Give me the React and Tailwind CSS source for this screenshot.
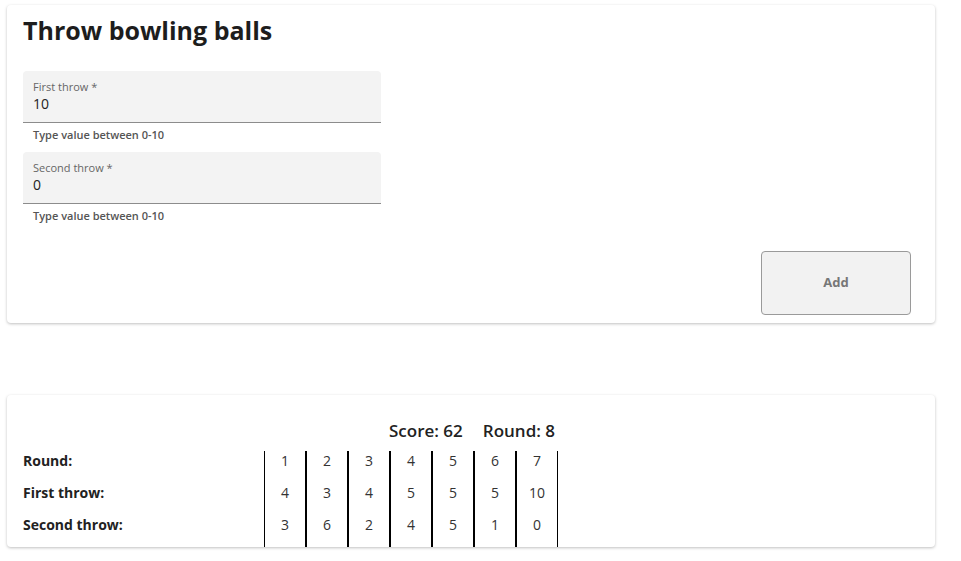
const ROUNDS = [
  { round: 1, first: 4, second: 3 },
  { round: 2, first: 3, second: 6 },
  { round: 3, first: 4, second: 2 },
  { round: 4, first: 5, second: 4 },
  { round: 5, first: 5, second: 5 },
  { round: 6, first: 5, second: 1 },
  { round: 7, first: 10, second: 0 },
];

function Field({ label, value }) {
  return (
    <div className="w-[358px]">
      <div className="h-[52px] bg-[#f3f3f3] rounded-t-[4px] border-b border-[#8c8c8c] px-[10px] pt-[9px]">
        <div className="text-[11px] leading-[14px] text-[#666]">{label} *</div>
        <div className="text-[14px] leading-[20px] text-[#222]">{value}</div>
      </div>
      <div className="px-[10px] pt-[4px] text-[11px] leading-[16px] font-semibold text-[#555]">
        Type value between 0-10
      </div>
    </div>
  );
}

export default function App() {
  return (
    <div className="min-h-[561px] bg-white pt-[5px] pl-[7px] text-[#222]" style={{ fontFamily: '"Open Sans", "DejaVu Sans", sans-serif' }}>
      {/* Form card */}
      <div className="w-[928px] h-[318px] rounded-[4px] bg-white shadow-[0_1px_3px_rgba(0,0,0,0.25)] px-[16px] pt-[9px] flex flex-col">
        <h1 className="text-[25px] leading-[32px] font-bold text-[#1d1d1d]">Throw bowling balls</h1>
        <div className="mt-[25px] flex flex-col gap-[9px]">
          <Field label="First throw" value="10" />
          <Field label="Second throw" value="0" />
        </div>
        <div className="flex justify-end mt-[27px] pr-[8px]">
          <button className="w-[150px] h-[64px] rounded-[4px] bg-[#f2f2f2] border border-[#9a9a9a] text-[13px] font-bold text-[#777]">
            Add
          </button>
        </div>
      </div>

      {/* Score card */}
      <div className="mt-[72px] w-[928px] h-[152px] rounded-[4px] bg-white shadow-[0_1px_3px_rgba(0,0,0,0.25)] pl-[16px] flex flex-col">
        <div className="pt-[25px] flex justify-center gap-[20px] text-[17px] leading-[22px] font-semibold text-[#222] pr-[14px]">
          <span>Score: 62</span>
          <span>Round: 8</span>
        </div>
        <div className="mt-[9px] flex flex-1">
          <div className="w-[241px] flex flex-col text-[14px] leading-[20px] font-bold text-[#222]">
            <div className="h-[32px]">Round:</div>
            <div className="h-[32px]">First throw:</div>
            <div className="h-[32px]">Second throw:</div>
          </div>
          {ROUNDS.map((r) => (
            <div key={r.round} className="w-[42px] border-x border-black flex flex-col text-[14px] leading-[20px] text-[#333] text-center">
              <div className="h-[32px]">{r.round}</div>
              <div className="h-[32px]">{r.first}</div>
              <div className="h-[32px]">{r.second}</div>
            </div>
          ))}
        </div>
      </div>
    </div>
  );
}
